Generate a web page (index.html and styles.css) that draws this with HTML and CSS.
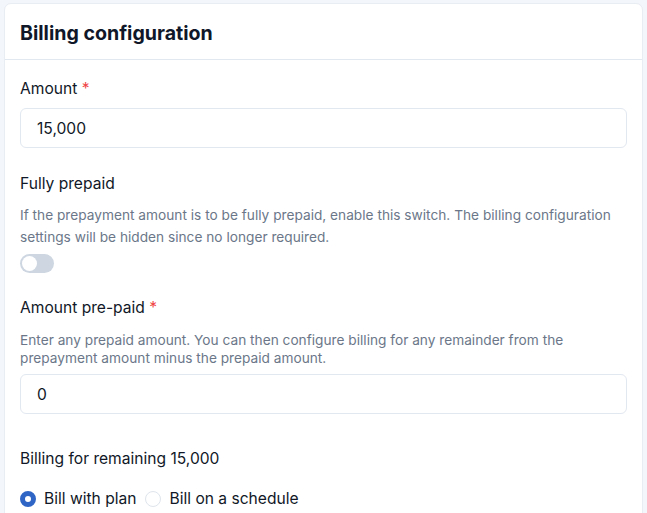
FILE: index.html
```html
<!DOCTYPE html>
<html lang="en">
<head>
  <meta charset="UTF-8" />
  <meta name="viewport" content="width=device-width, initial-scale=1.0"/>
  <title>Billing configuration</title>
  <link rel="stylesheet" href="styles.css">
</head>
<body>

  <div class="card">
    <div class="card-header">
      <h2>Billing configuration</h2>
    </div>

    <div class="card-body">
      <!-- Amount -->
      <label class="field-label">Amount <span class="req">*</span></label>
      <input class="text-input first" type="text" value="15,000" />

      <!-- Fully prepaid -->
      <label class="field-label gap-top prepaid">Fully prepaid</label>
      <p class="help wide">If the prepayment amount is to be fully prepaid, enable this switch. The billing configuration settings will be hidden since no longer required.</p>
      <div class="switch"><span class="knob"></span></div>

      <!-- Amount pre-paid -->
      <label class="field-label gap-top">Amount pre-paid <span class="req">*</span></label>
      <p class="help tight">Enter any prepaid amount. You can then configure billing for any remainder from the prepayment amount minus the prepaid amount.</p>
      <input class="text-input" type="text" value="0" />

      <!-- Billing -->
      <label class="field-label billing">Billing for remaining 15,000</label>
      <div class="radios">
        <label class="radio"><span class="dot checked"></span>Bill with plan</label>
        <label class="radio"><span class="dot"></span>Bill on a schedule</label>
      </div>
    </div>
  </div>

</body>
</html>
```

FILE: styles.css
```css
* {
  margin: 0;
  padding: 0;
  box-sizing: border-box;
  font-family: 'Inter', 'DejaVu Sans', sans-serif;
}

body {
  background: #f3f6fa;
  color: #111827;
  padding: 3px 4px 0 4px;
}

.card {
  background: #ffffff;
  border: 1px solid #e8edf3;
  border-radius: 7px;
  height: 520px;
}

.card-header {
  height: 56px;
  display: flex;
  align-items: center;
  padding: 3px 15px 0 15px;
  border-bottom: 1px solid #e2e8f0;
}

.card-header h2 {
  font-size: 19.6px;
  font-weight: 700;
  color: #0f1729;
}

.card-body {
  padding: 19px 15px 0 15px;
  display: flex;
  flex-direction: column;
}

.field-label {
  display: block;
  font-size: 15.6px;
  line-height: 20px;
  color: #111827;
}

.req {
  color: #ef4444;
}

.gap-top {
  margin-top: 25px;
}

.gap-top.prepaid {
  margin-top: 26px;
}

.text-input {
  width: 100%;
  height: 40px;
  margin-top: 10px;
  padding: 0 16px;
  border: 1px solid #e2e8f0;
  border-radius: 6px;
  font-size: 15.6px;
  color: #111827;
  background: #fff;
}

.text-input.first {
  margin-top: 9px;
}

.help {
  font-size: 13.7px;
  color: #6b7789;
}

.help.wide {
  line-height: 22px;
  margin-top: 10px;
}

.help.tight {
  line-height: 17.5px;
  margin-top: 14px;
}

.help.tight + .text-input {
  margin-top: 7px;
}

.switch {
  width: 34px;
  height: 19px;
  margin-top: 6px;
  border-radius: 10px;
  background: #cdd6e1;
  padding: 2px;
}

.knob {
  display: block;
  width: 15px;
  height: 15px;
  border-radius: 50%;
  background: #fff;
}

.billing {
  margin-top: 35px;
}

.radios {
  display: flex;
  gap: 9px;
  margin-top: 20px;
}

.radio {
  display: flex;
  align-items: center;
  gap: 8px;
  font-size: 15.6px;
  line-height: 20px;
}

.dot {
  width: 16px;
  height: 16px;
  border-radius: 50%;
  border: 1px solid #dfe5ec;
  background: #fff;
}

.dot.checked {
  border: 5px solid #2f66c6;
}
```
